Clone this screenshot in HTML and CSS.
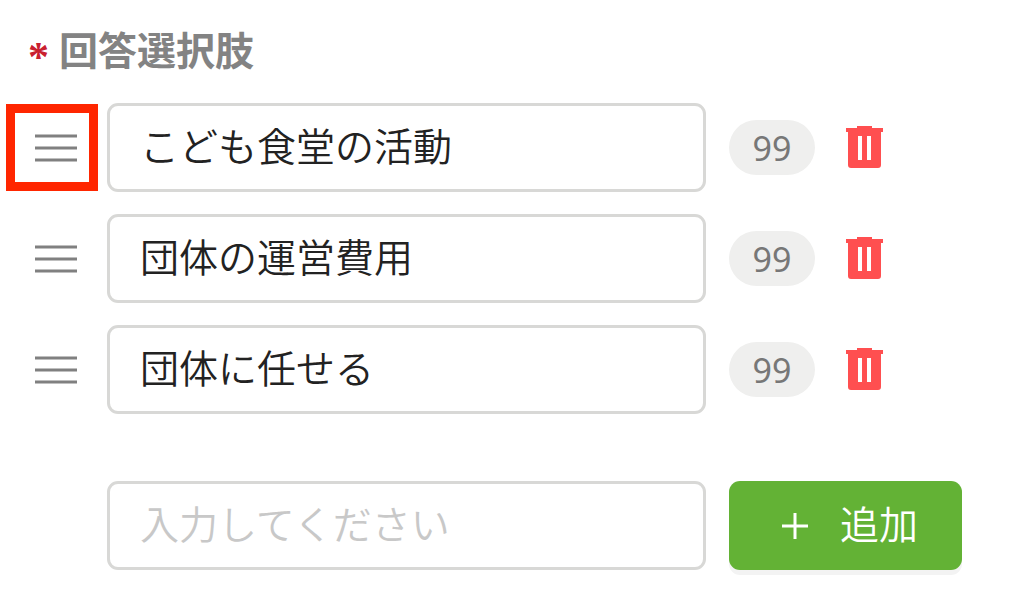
FILE: index.html
```html
<!DOCTYPE html>
<html lang="ja">
<head>
    <meta charset="UTF-8">
    <meta name="viewport" content="width=device-width, initial-scale=1.0">
    <title>回答選択肢</title>
    <link rel="stylesheet" href="styles.css">
</head>
<body>

    <form class="choices">
        <h1 id="choices-title"><span class="required">*</span>回答選択肢</h1>

        <ul class="choice-list">
            <li class="row">
                <button type="button" class="handle marked" aria-label="並べ替え">
                    <svg width="42" height="28" viewBox="0 0 42 28"><path d="M0 2h42M0 14h42M0 26h42"/></svg>
                </button>
                <input type="text" value="こども食堂の活動" aria-labelledby="choices-title">
                <div class="side">
                    <span class="count">99</span>
                    <button type="button" class="delete" aria-label="削除">
                        <svg width="38" height="43" viewBox="0 0 38 43"><path fill-rule="evenodd" d="M11 0h15v2h11v4h-2v33q0 3-3 3H5q-3 0-3-3V6H0V2h11zM12 10h4v24h-4zM21 10h4v24h-4z"/></svg>
                    </button>
                </div>
            </li>
            <li class="row">
                <button type="button" class="handle" aria-label="並べ替え">
                    <svg width="42" height="28" viewBox="0 0 42 28"><path d="M0 2h42M0 14h42M0 26h42"/></svg>
                </button>
                <input type="text" value="団体の運営費用" aria-labelledby="choices-title">
                <div class="side">
                    <span class="count">99</span>
                    <button type="button" class="delete" aria-label="削除">
                        <svg width="38" height="43" viewBox="0 0 38 43"><path fill-rule="evenodd" d="M11 0h15v2h11v4h-2v33q0 3-3 3H5q-3 0-3-3V6H0V2h11zM12 10h4v24h-4zM21 10h4v24h-4z"/></svg>
                    </button>
                </div>
            </li>
            <li class="row">
                <button type="button" class="handle" aria-label="並べ替え">
                    <svg width="42" height="28" viewBox="0 0 42 28"><path d="M0 2h42M0 14h42M0 26h42"/></svg>
                </button>
                <input type="text" value="団体に任せる" aria-labelledby="choices-title">
                <div class="side">
                    <span class="count">99</span>
                    <button type="button" class="delete" aria-label="削除">
                        <svg width="38" height="43" viewBox="0 0 38 43"><path fill-rule="evenodd" d="M11 0h15v2h11v4h-2v33q0 3-3 3H5q-3 0-3-3V6H0V2h11zM12 10h4v24h-4zM21 10h4v24h-4z"/></svg>
                    </button>
                </div>
            </li>
        </ul>

        <div class="row add-row">
            <input type="text" placeholder="入力してください" aria-labelledby="choices-title">
            <button type="button" class="add">
                <svg width="28" height="28" viewBox="0 0 28 28"><path d="M14 1v26M1 14h26"/></svg>
                <span>追加</span>
            </button>
        </div>
    </form>

</body>
</html>
```

FILE: styles.css
```css
* {
    box-sizing: border-box;
}

body {
    margin: 0;
    background-color: #fff;
    color: #222;
    font-family: "Noto Sans CJK JP", sans-serif;
    font-size: 39px;
    font-weight: 350;
}

button, input {
    font: inherit;
    color: inherit;
}

button {
    padding: 0;
    border: 0;
    background: none;
    cursor: pointer;
}

svg {
    display: block;
}

.choices {
    padding: 18px 62px 20px 6px;
}

h1 {
    display: flex;
    gap: 10px;
    margin: 0 0 25px 22px;
    font-size: 39px;
    line-height: 60px;
    font-weight: 700;
    color: #838383;
}

.required {
    padding-top: 18px;
    color: #c9202f;
    font-family: "Liberation Serif", serif;
    font-size: 42px;
    font-weight: 700;
    line-height: 42px;
}

.choice-list {
    display: grid;
    gap: 22px;
    margin: 0;
    padding: 0;
    list-style: none;
}

.row {
    display: grid;
    grid-template-columns: 92px minmax(0, 1fr) 233px;
    align-items: center;
}

.handle {
    display: flex;
    align-items: center;
    height: 87px;
    padding-left: 29px;
}

.handle path {
    stroke: #808080;
    stroke-width: 3;
}

/* highlighted drag handle */
.marked {
    padding-left: 20px;
    border: 9px solid #ff2600;
}

input {
    height: 89px;
    margin: 0 23px 0 9px;
    padding: 0 30px 8px;
    border: 3px solid #d8d8d6;
    border-radius: 11px;
    background-color: #fff;
}

input::placeholder {
    color: #c8c8c8;
    opacity: 1;
}

.side {
    display: flex;
    align-items: center;
    gap: 31px;
}

.count {
    width: 86px;
    padding-top: 2px;
    border-radius: 28px;
    background-color: #efefee;
    color: #777;
    font-family: "Noto Sans", sans-serif;
    font-size: 34px;
    font-weight: 400;
    line-height: 53px;
    text-align: center;
}

.delete path {
    fill: #ff4f50;
}

.add-row {
    margin-top: 67px;
}

.add-row input {
    grid-column: 2;
}

.add {
    display: flex;
    align-items: center;
    justify-content: center;
    gap: 31px;
    height: 89px;
    padding-left: 8px;
    border-radius: 11px;
    background-color: #63b235;
    box-shadow: 0 5px 0 #f3f3f3;
    color: #fff;
}

.add span {
    padding-bottom: 8px;
}

.add path {
    stroke: #fff;
    stroke-width: 3;
}
```
